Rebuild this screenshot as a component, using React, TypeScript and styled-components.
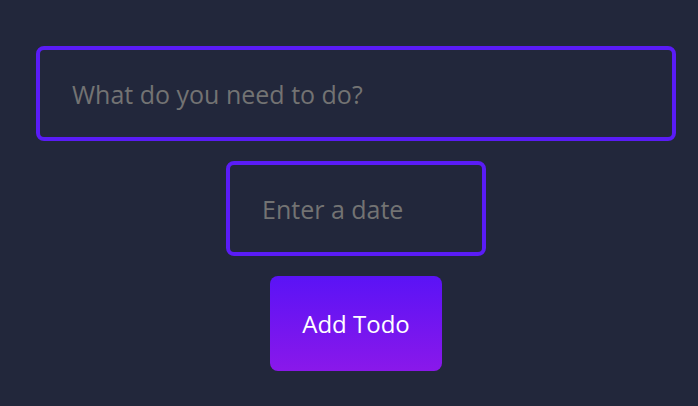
import React from "react";
import styled, { createGlobalStyle } from "styled-components";

const Global = createGlobalStyle`
  html, body {
    margin: 0;
    padding: 0;
    background: #22273b;
    height: 100%;
  }
  body {
    font-family: "Open Sans", Lato, sans-serif;
  }
`;

const Form = styled.form`
  display: flex;
  flex-direction: column;
  align-items: center;
  gap: 20px;
  padding: 46px 22px 0 36px;
`;

const Field = styled.input<{ $width: string }>`
  box-sizing: border-box;
  width: ${(p) => p.$width};
  height: 95px;
  padding: 0 32px;
  background: transparent;
  border: 4px solid #5a1cf6;
  border-radius: 8px;
  font-family: "Open Sans", Lato, sans-serif;
  font-size: 25px;
  color: #ffffff;
  outline: none;
  &::placeholder {
    color: #737373;
  }
`;

const Button = styled.button`
  box-sizing: border-box;
  width: 172px;
  height: 95px;
  border: none;
  border-radius: 8px;
  background: linear-gradient(to bottom, #5a13f6, #8a18ea);
  color: #ffffff;
  font-family: "Open Sans", Lato, sans-serif;
  font-size: 24px;
  cursor: pointer;
`;

export default function App() {
  return (
    <>
      <Global />
      <Form onSubmit={(e) => e.preventDefault()}>
        <Field $width="640px" type="text" placeholder="What do you need to do?" />
        <Field $width="260px" type="text" placeholder="Enter a date" />
        <Button type="submit">Add Todo</Button>
      </Form>
    </>
  );
}
